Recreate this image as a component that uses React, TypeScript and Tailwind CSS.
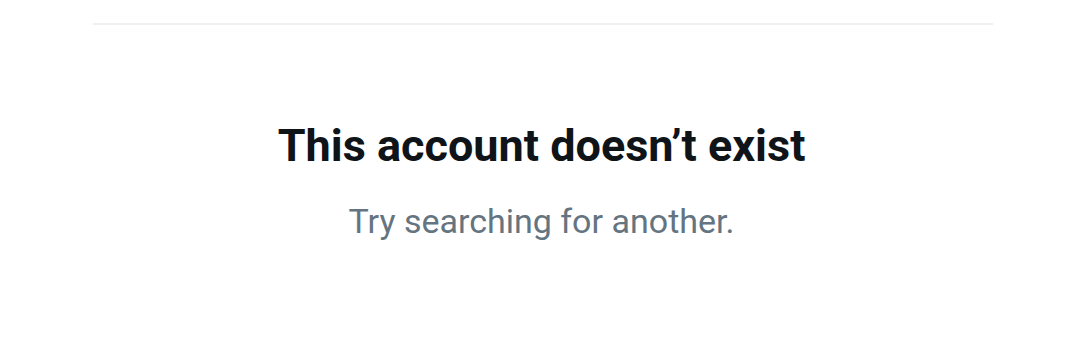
export default function App() {
  return (
    <div className="w-[1080px] h-[360px] bg-white overflow-hidden font-['Roboto',sans-serif]">
      <div className="ml-[93px] mr-[87px] mt-[23px] h-[2px] bg-[#eef1f2]" />
      <div className="flex flex-col items-center pt-[95px] pl-[3px]">
        <h1 className="text-[45px] leading-[52px] font-bold text-[#0f1419]">
          This account doesn’t exist
        </h1>
        <p className="mt-[29px] text-[34px] leading-[40px] text-[#647480]">
          Try searching for another.
        </p>
      </div>
    </div>
  );
}
